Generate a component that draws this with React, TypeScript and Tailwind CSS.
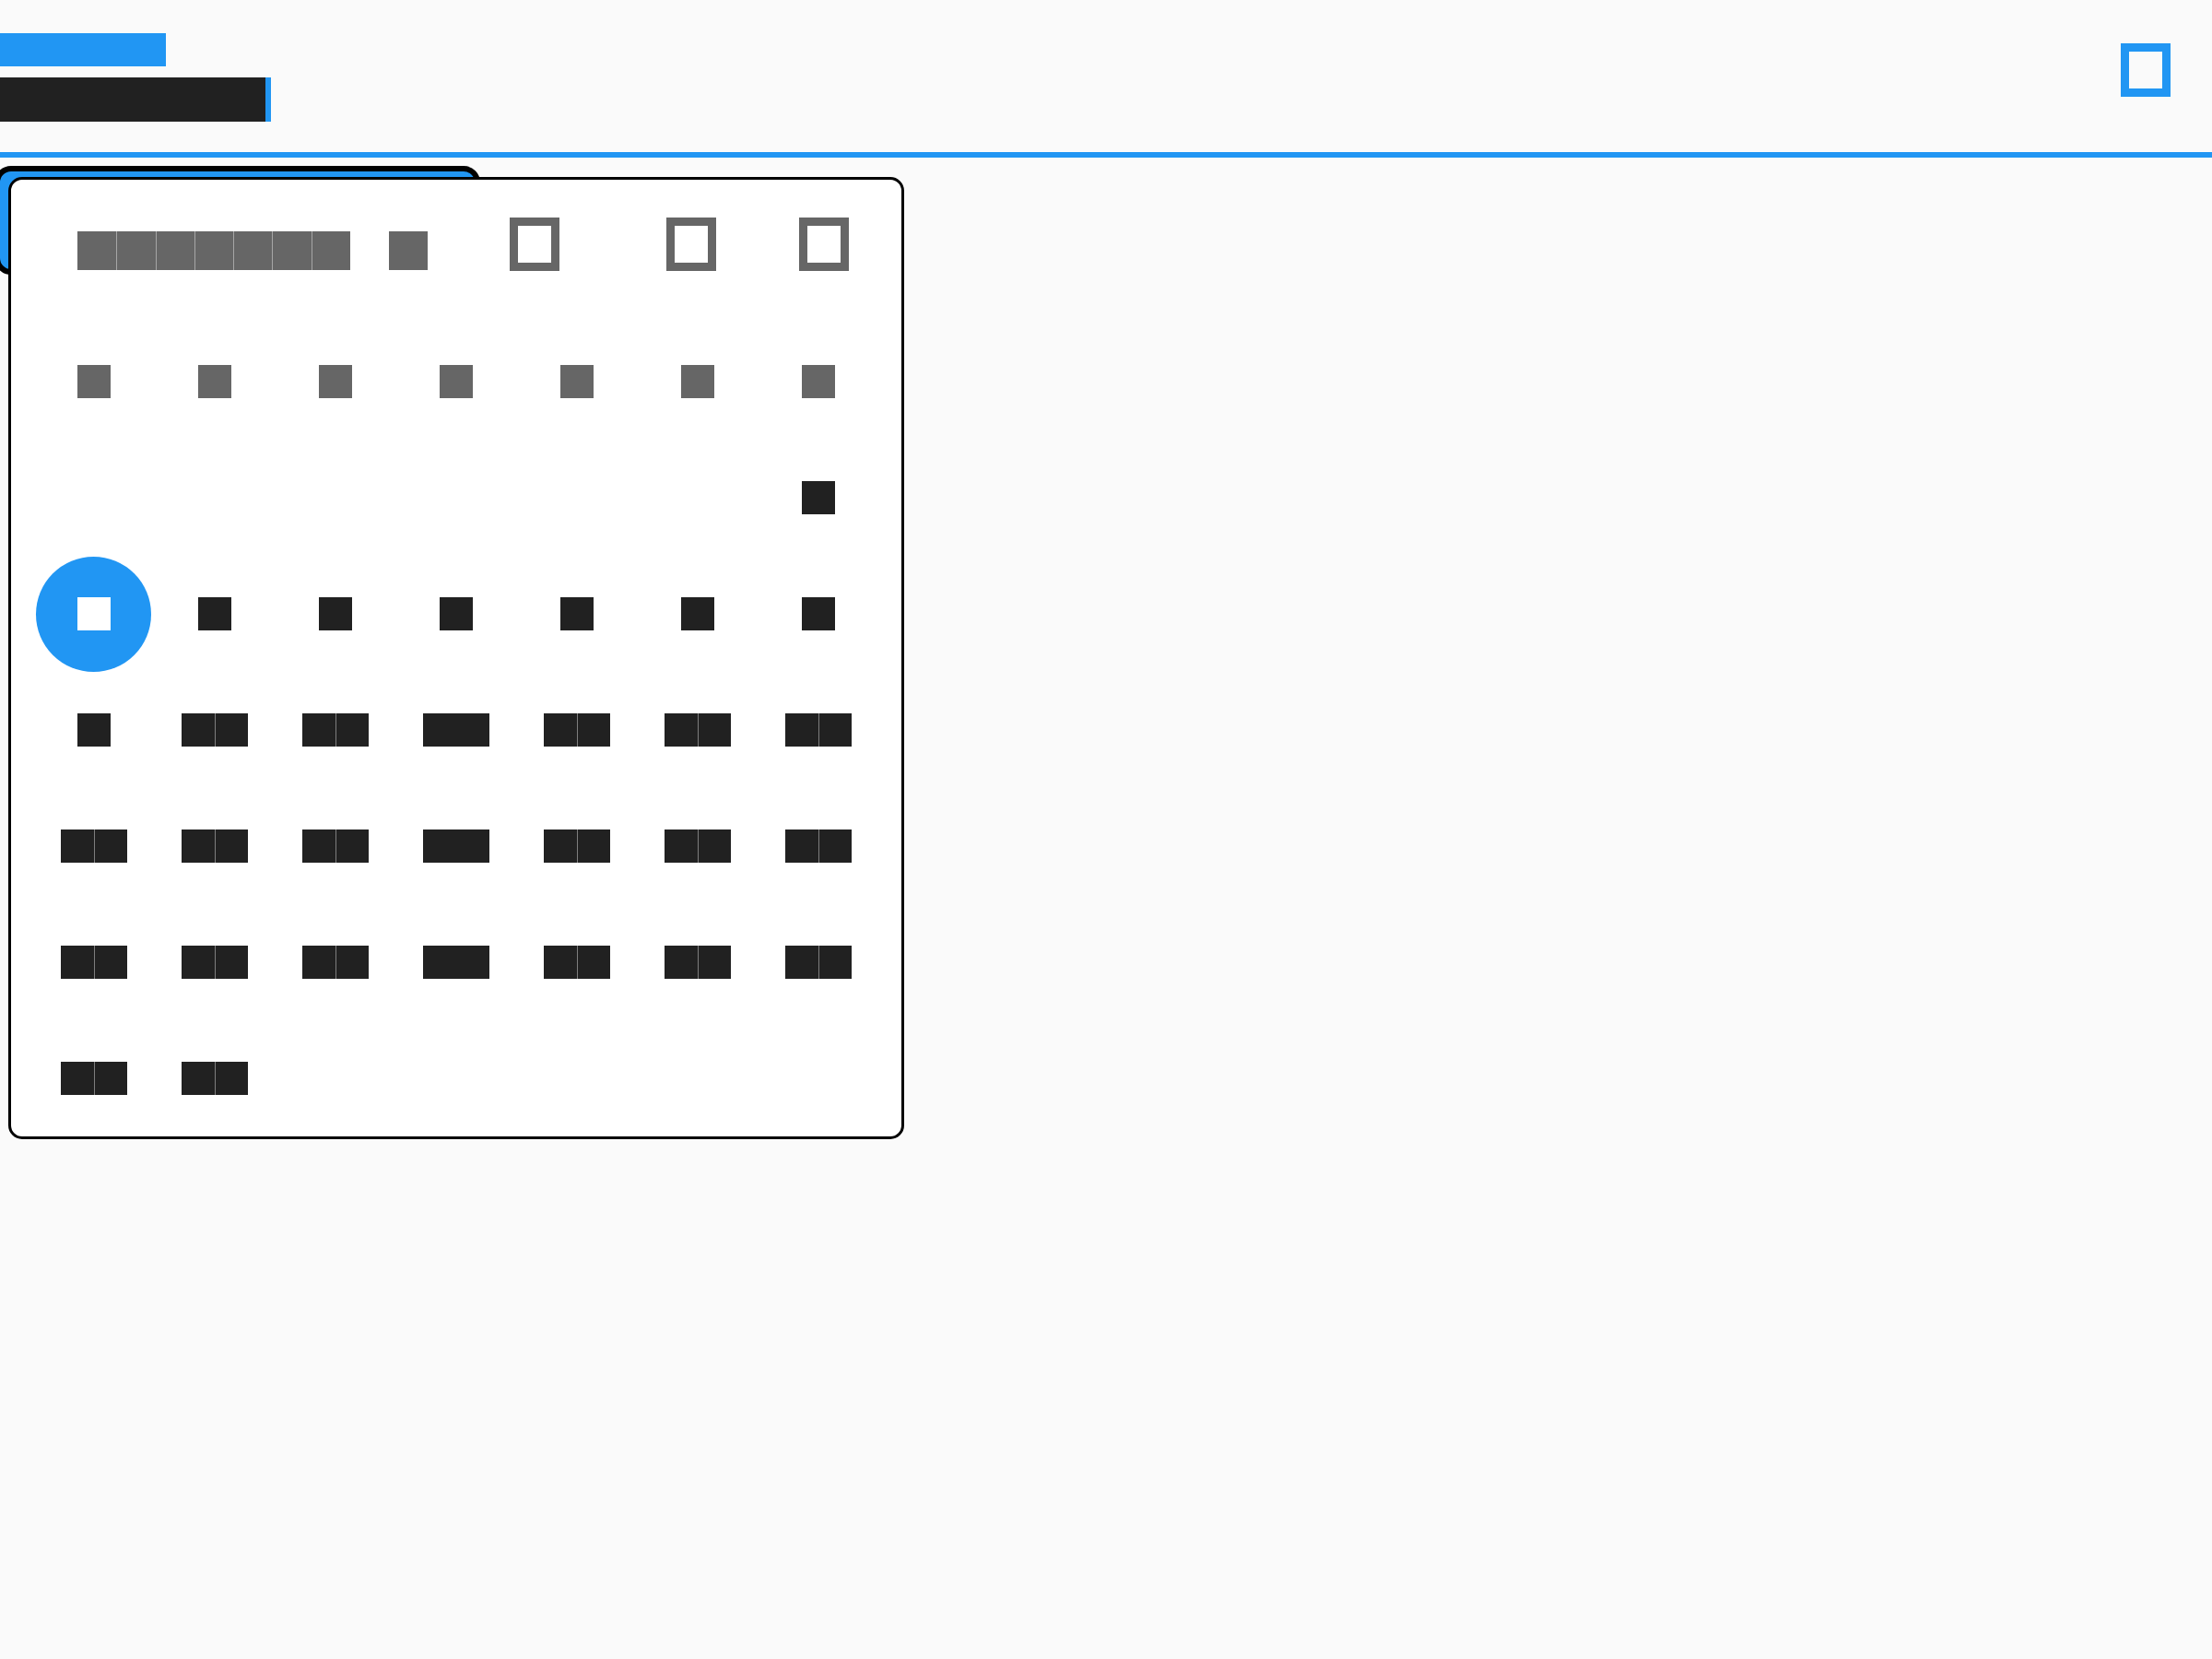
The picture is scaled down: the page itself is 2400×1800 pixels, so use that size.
import React from "react";

// Every glyph in the reference is drawn as a solid em-box (test font), so each
// character is kept as real text inside a box of its own colour.
type GlyphStyle = { box: string; fill: string; inner: string; seam?: boolean };

const LABEL: GlyphStyle = {
  box: "w-[36px] h-[36px]",
  fill: "bg-[#2196f3] text-[#2196f3]",
  inner: "text-[22px] leading-[36px]",
};
const INPUT: GlyphStyle = {
  box: "w-[48px] h-[48px]",
  fill: "bg-[#212121] text-[#212121]",
  inner: "text-[30px] leading-[48px]",
};
const TITLE: GlyphStyle = {
  box: "w-[42.25px] h-[42px]",
  fill: "bg-[#666666] text-[#666666]",
  inner: "text-[26px] leading-[42px]",
  seam: true,
};
const WEEKDAY: GlyphStyle = {
  box: "w-[36px] h-[36px]",
  fill: "bg-[#666666] text-[#666666]",
  inner: "text-[22px] leading-[36px]",
};
const DAY: GlyphStyle = {
  box: "w-[36px] h-[36px]",
  fill: "bg-[#212121] text-[#212121]",
  inner: "text-[22px] leading-[36px]",
  seam: true,
};
// the middle column sits on whole pixels, so its glyphs run together
const DAY_SOLID: GlyphStyle = { ...DAY, seam: false };
const DAY_SELECTED: GlyphStyle = {
  box: "w-[36px] h-[36px]",
  fill: "bg-white text-white",
  inner: "text-[22px] leading-[36px]",
};

function Glyphs({ text, s }: { text: string; s: GlyphStyle }) {
  const chars = Array.from(text);
  return (
    <span className="flex font-['Liberation_Sans',sans-serif]">
      {chars.map((ch, i) => {
        const joined = s.seam && i > 0 && chars[i - 1] !== " " && ch !== " ";
        return (
          <span
            key={i}
            className={`${s.box} ${s.inner} ${ch === " " ? "text-transparent" : s.fill} ${
              joined ? "shadow-[inset_1px_0_0_rgba(255,255,255,0.42)]" : ""
            } block shrink-0 overflow-hidden text-center`}
          >
            {ch}
          </span>
        );
      })}
    </span>
  );
}

function BoxIcon({ color, label }: { color: string; label: string }) {
  return (
    <span
      aria-label={label}
      className={`block w-[54px] h-[58px] border-[9px] ${color}`}
    />
  );
}

const WEEKDAYS = ["S", "M", "T", "W", "T", "F", "S"];
const FIRST_WEEKDAY = 6; // 1 October 2016 was a Saturday
const DAYS_IN_MONTH = 31;
const SELECTED = 2;

export default function App() {
  const cells: (number | null)[] = [
    ...Array(FIRST_WEEKDAY).fill(null),
    ...Array.from({ length: DAYS_IN_MONTH }, (_, i) => i + 1),
  ];

  return (
    <div className="relative min-h-screen overflow-hidden bg-[#fafafa]">
      {/* text field */}
      <div className="flex h-[165px] items-start justify-between">
        <div className="flex flex-col gap-[12px] pt-[36px]">
          <Glyphs text="Start" s={LABEL} />
          <div className="flex items-start">
            <Glyphs text="Oct-02" s={INPUT} />
            <span className="block h-[48px] w-[6px] bg-[#2196f3]" />
          </div>
        </div>
        <div className="mr-[45px] mt-[47px]">
          <BoxIcon color="border-[#2196f3]" label="calendar" />
        </div>
      </div>
      <div className="h-[6px] bg-[#2196f3]" />

      {/* anchor the picker opens from */}
      <div className="-ml-[6px] mt-[9px] h-[118px] w-[527px] rounded-[18px] border-[6px] border-black bg-[#2196f3]" />

      {/* calendar popup */}
      <div className="absolute left-[9px] top-[192px] h-[1044px] w-[972px] rounded-[15px] border-[3px] border-black bg-white">
        <div className="flex h-[156px] items-end pb-[58px] pl-[72px] pr-[57px]">
          <Glyphs text="October …" s={TITLE} />
          <span className="-mb-[1px] ml-[89px]">
            <BoxIcon color="border-[#666666]" label="arrow_drop_down" />
          </span>
          <span className="flex-1" />
          <span className="-mb-[1px]">
            <BoxIcon color="border-[#666666]" label="chevron_left" />
          </span>
          <span className="-mb-[1px] ml-[90px]">
            <BoxIcon color="border-[#666666]" label="chevron_right" />
          </span>
        </div>

        <div className="grid grid-cols-7 px-[24px]">
          {WEEKDAYS.map((d, i) => (
            <div key={`w${i}`} className="flex h-[126px] items-center justify-center">
              <Glyphs text={d} s={WEEKDAY} />
            </div>
          ))}
          {cells.map((d, i) => (
            <div key={i} className="flex h-[126px] items-center justify-center">
              {d === null ? null : d === SELECTED ? (
                <span className="flex h-[125px] w-[125px] items-center justify-center rounded-full bg-[#2196f3]">
                  <Glyphs text={String(d)} s={DAY_SELECTED} />
                </span>
              ) : (
                <Glyphs text={String(d)} s={i % 7 === 3 ? DAY_SOLID : DAY} />
              )}
            </div>
          ))}
        </div>
      </div>
    </div>
  );
}
